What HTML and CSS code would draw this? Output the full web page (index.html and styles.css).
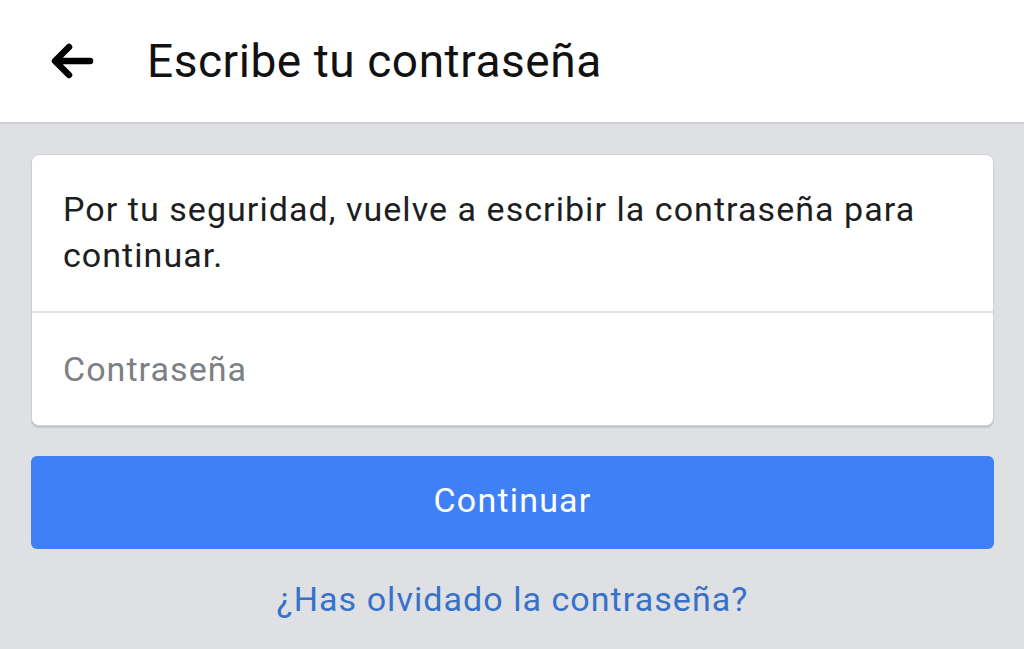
FILE: index.html
```html
<!DOCTYPE html>
<html lang="es">
<head>
  <meta charset="UTF-8" />
  <meta name="viewport" content="width=device-width, initial-scale=1.0"/>
  <title>Escribe tu contraseña</title>
  <link rel="stylesheet" href="styles.css">
</head>
<body>
  <header class="barra">
    <button class="volver" aria-label="Volver">
      <svg width="44" height="36" viewBox="0 0 44 36">
        <path d="M40 18 H6 M19 4 L5 18 L19 32" fill="none" stroke="#000" stroke-width="6.5" stroke-linecap="round" stroke-linejoin="round"/>
      </svg>
    </button>
    <h1>Escribe tu contraseña</h1>
  </header>
  <main class="contenido">
    <div class="tarjeta">
      <p class="mensaje">Por tu seguridad, vuelve a escribir la contraseña para continuar.</p>
      <input class="campo" type="password" placeholder="Contraseña" />
    </div>
    <button class="continuar">Continuar</button>
    <a class="olvido" href="#">¿Has olvidado la contraseña?</a>
  </main>
</body>
</html>
```

FILE: styles.css
```css
html, body {
  height: 100%;
}
body {
  margin: 0;
  font-family: Roboto, "Liberation Sans", Arial, sans-serif;
  background: #dfe0e4;
  color: #1c1e21;
  letter-spacing: 1.05px;
}
.barra {
  display: flex;
  align-items: center;
  height: 124px;
  background: #fff;
  border-bottom: 2px solid #cfd0d4;
  box-sizing: border-box;
  padding-left: 50px;
}
.volver {
  display: flex;
  padding: 0;
  border: none;
  background: none;
  width: 97px;
}
.barra h1 {
  margin: 0;
  font-size: 46px;
  font-weight: 400;
  color: #111;
  letter-spacing: 0.55px;
}
.contenido {
  display: flex;
  flex-direction: column;
  padding: 30px 30px 0 31px;
}
.tarjeta {
  background: #fff;
  border: 1px solid #cfd0d4;
  border-radius: 8px;
  box-shadow: 0 2px 1px rgba(0,0,0,0.12);
}
.mensaje {
  margin: 0;
  padding: 31px 40px 33px 31px;
  font-size: 34px;
  line-height: 46px;
  color: #1c1e21;
  border-bottom: 2px solid #e4e5e8;
}
.campo {
  display: block;
  width: 100%;
  box-sizing: border-box;
  height: 112px;
  padding: 0 31px;
  border: none;
  background: transparent;
  font-family: inherit;
  font-size: 34px;
  letter-spacing: 1.05px;
  outline: none;
}
.campo::placeholder {
  color: #7c7f84;
}
.continuar {
  margin-top: 30px;
  height: 93px;
  padding: 0 0 5px;
  border: none;
  border-radius: 6px;
  background: #4080f7;
  color: #fff;
  font-family: inherit;
  font-size: 34px;
  letter-spacing: 1.2px;
}
.olvido {
  margin-top: 30px;
  text-align: center;
  font-size: 34px;
  color: #3672c9;
  text-decoration: none;
}
```
